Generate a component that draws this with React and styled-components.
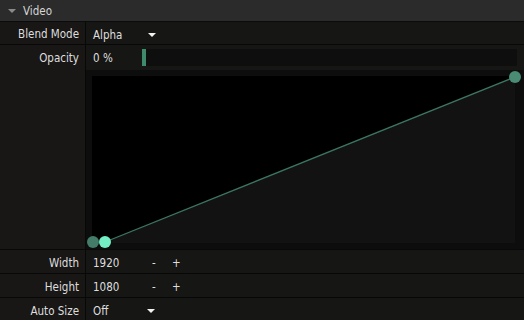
import React from 'react'
import styled, { createGlobalStyle } from 'styled-components'

const Global = createGlobalStyle`
  body {
    margin: 0;
    background: #181716;
    font-family: "DejaVu Sans Condensed", "Liberation Sans", Arial, sans-serif;
    font-size: 11.5px;
    color: #dedede;
  }
`

const Panel = styled.div`
  width: 524px;
  height: 320px;
  overflow: hidden;
  display: flex;
  flex-direction: column;
  background: #181716;
`

const Header = styled.div`
  height: 22px;
  flex: none;
  border-bottom: 1px solid #0b0b0b;
  background: #2b2b2b;
  display: flex;
  align-items: center;
  padding: 0 0 0 8px;
  box-sizing: border-box;
  gap: 7px;
  color: #d6d6d6;
`

const Caret = styled.span`
  width: 0;
  height: 0;
  border-left: ${p => p.$size}px solid transparent;
  border-right: ${p => p.$size}px solid transparent;
  border-top: ${p => p.$size}px solid ${p => p.$color};
`

const Row = styled.div`
  display: flex;
  flex: none;
  height: ${p => p.$h}px;
  border-bottom: 1px solid #080808;
`

const Label = styled.div`
  width: 86px;
  flex: none;
  border-right: 1px solid #080808;
  display: flex;
  justify-content: flex-end;
  align-items: ${p => (p.$top ? 'flex-start' : 'center')};
  padding: ${p => (p.$top ? '5px 6px 0 0' : '3px 6px 0 0')};
  box-sizing: border-box;
  line-height: 17px;
`

const Value = styled.div`
  flex: 1;
  display: flex;
  align-items: center;
  padding: 3px 0 0 7px;
  background: #161615;
`

const Text = styled.span`
  width: ${p => p.$w}px;
  flex: none;
`

const Step = styled.span`
  width: 20px;
  flex: none;
`

const Stack = styled.div`
  flex: 1;
  display: flex;
  flex-direction: column;
  background: #161615;
`

const SliderRow = styled.div`
  height: 25px;
  display: flex;
  align-items: center;
  padding-left: 7px;
  padding-right: 7px;
`

const Track = styled.div`
  flex: 1;
  height: 17px;
  background: #0e0e0e;
  display: flex;
`

const Fill = styled.div`
  background: #3e8a6d;
`

const Graph = styled.div`
  flex: 1;
  background: #0d0d0d;
  padding: 6px 7px 5px 6px;
  display: flex;
`

const Plot = styled.svg`
  display: block;
  overflow: visible;
  background: #000;
`

function CurveEditor() {
  const w = 423
  const h = 167
  return (
    <Plot width={w} height={h}>
      <polygon points={`13,166 ${w},1 ${w},${h} 13,${h}`} fill="#121212" />
      <line x1="13" y1="166" x2={w} y2="1" stroke="#3b7664" strokeWidth="1.3" />
      <circle cx="1" cy="166" r="6" fill="#437c69" />
      <circle cx="13" cy="166" r="6" fill="#72edc4" />
      <circle cx={w} cy="1" r="6" fill="#4a8b74" />
    </Plot>
  )
}

export default function App() {
  const opacity = 0
  return (
    <Panel>
      <Global />
      <Header>
        <Caret $size={4} $color="#8a8a8a" />
        Video
      </Header>
      <Row $h={22}>
        <Label>Blend Mode</Label>
        <Value>
          <Text $w={55}>Alpha</Text>
          <Caret $size={4} $color="#f2f2f2" />
        </Value>
      </Row>
      <Row $h={204}>
        <Label $top>Opacity</Label>
        <Stack>
          <SliderRow>
            <Text $w={49}>{opacity} %</Text>
            <Track>
              <Fill style={{ width: Math.max(4, opacity * 3.74) }} />
            </Track>
          </SliderRow>
          <Graph>
            <CurveEditor />
          </Graph>
        </Stack>
      </Row>
      <Row $h={23}>
        <Label>Width</Label>
        <Value>
          <Text $w={59}>1920</Text>
          <Step>-</Step>
          <Step>+</Step>
        </Value>
      </Row>
      <Row $h={23}>
        <Label>Height</Label>
        <Value>
          <Text $w={59}>1080</Text>
          <Step>-</Step>
          <Step>+</Step>
        </Value>
      </Row>
      <Row $h={23}>
        <Label>Auto Size</Label>
        <Value>
          <Text $w={54}>Off</Text>
          <Caret $size={4} $color="#f2f2f2" />
        </Value>
      </Row>
    </Panel>
  )
}
